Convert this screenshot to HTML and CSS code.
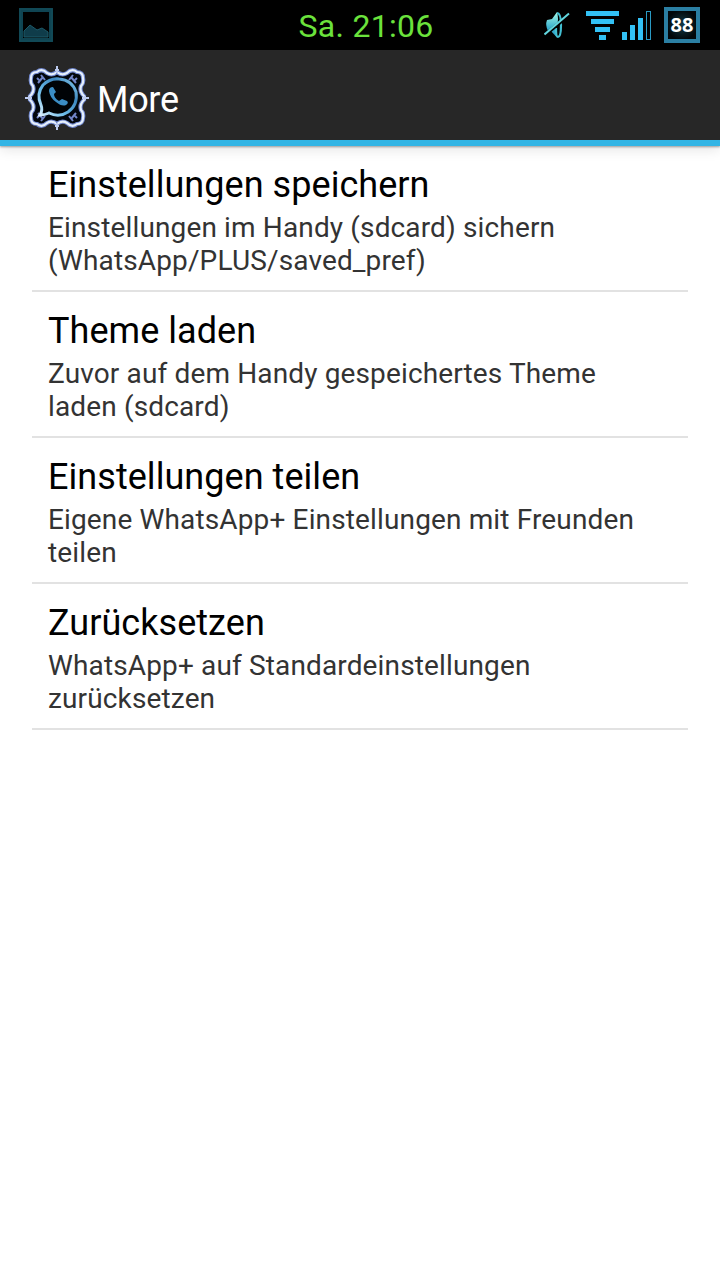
FILE: index.html
```html
<!DOCTYPE html>
<html lang="de">
  <head>
    <meta charset="utf-8">
    <title>More</title>
    <link rel="stylesheet" href="styles.css">
  </head>
  <body>
    <div class="status-bar">
      <div class="status-left">
        <svg class="icon-picture" width="34" height="34" viewBox="0 0 34 34">
          <rect x="2" y="2" width="30" height="30" fill="#000" stroke="#0f4452" stroke-width="4" />
          <rect x="1" y="1" width="32" height="32" fill="none" stroke="#144e5b" stroke-width="1" />
          <path d="M5 23 L11 17 L18 22 L23 20 L29 24 V29 H5 Z" fill="#0f3c4a" stroke="#1c5867" />
        </svg>
      </div>
      <span class="clock">Sa. 21:06</span>
      <div class="status-right">
        <svg class="icon-mute" width="26" height="28" viewBox="0 0 26 28">
          <defs>
            <linearGradient id="muteFill" x1="0" y1="0" x2="0" y2="1">
              <stop offset="0" stop-color="#a5fbe8" />
              <stop offset="1" stop-color="#229fc8" />
            </linearGradient>
          </defs>
          <path d="M3 9 L8 8 L13 1 Q15 8 13 14 L4 20 Q1 14 3 9 Z" fill="url(#muteFill)" />
          <path d="M7 20 L12 16 L12.500 26 Z" fill="#35aacb" />
          <path d="M13 2 Q17 2 17 14 Q17 26 14 26 Q12 26 12 17" fill="none" stroke="#43bfd2" stroke-width="2.200" />
          <path d="M1 24 L25 4" stroke="#000" stroke-width="3.500" />
          <path d="M0.500 23.500 L25 2.500" stroke="#62d6df" stroke-width="2" />
        </svg>
        <svg class="icon-wifi" width="33" height="29" viewBox="0 0 33 29">
          <path d="M0 0H33V5H0Z M5 8H28V13H5Z M9 16H24V21H9Z M13 24H20V29H13Z" fill="#33c1f5" />
        </svg>
        <svg class="icon-signal" width="29" height="29" viewBox="0 0 29 29">
          <path d="M0 21H5V29H0Z M8 14H13V29H8Z M16 7H21V29H16Z" fill="#33c1f5" />
          <rect x="24.500" y="0.500" width="4" height="28" fill="none" stroke="#2a9ac4" />
        </svg>
        <div class="battery">88</div>
      </div>
    </div>

    <div class="action-bar">
      <svg class="app-icon" width="64" height="64" viewBox="0 0 64 64">
        <defs>
          <linearGradient id="ring" x1="0" y1="1" x2="1" y2="0">
            <stop offset="0" stop-color="#e0f2ff" />
            <stop offset="0.350" stop-color="#6cbcea" />
            <stop offset="0.700" stop-color="#3c86be" />
            <stop offset="1" stop-color="#8cd0f2" />
          </linearGradient>
          <!-- one corner of the frame, mirrored into the other three -->
          <g id="corner">
            <path d="M32 6 Q27 10 22 7 Q17 2 12 6 Q6 6 6 12 Q5 17 8 20 Q10 26 4 31" fill="none" stroke="#6f86cc" stroke-width="4.200" />
            <path d="M32 6 Q27 10 22 7 Q17 2 12 6 Q6 6 6 12 Q5 17 8 20 Q10 26 4 31" fill="none" stroke="#e6f0fc" stroke-width="2.200" />
            <path d="M13 17 L18 11 M16 9 L20 14 M12 12 L14 14" fill="none" stroke="#7286c8" stroke-width="2" />
            <path d="M32 0 V7 M30 4 H32 M0 32 H7 M4 30 V32" fill="none" stroke="#bccbef" stroke-width="2" />
          </g>
        </defs>
        <path d="M32 8 Q38 9 43 8 Q50 4 57 7 Q60 13 56 20 Q55 27 60 32 Q55 38 56 44 Q60 51 57 57 Q50 60 43 56 Q38 55 32 56 Q26 55 21 56 Q14 60 7 57 Q4 51 8 44 Q9 38 4 32 Q9 27 8 20 Q4 13 7 7 Q14 4 21 8 Q26 9 32 8 Z" fill="#02070d" />
        <use href="#corner" />
        <use href="#corner" transform="translate(64 0) scale(-1 1)" />
        <use href="#corner" transform="translate(0 64) scale(1 -1)" />
        <use href="#corner" transform="translate(64 64) scale(-1 -1)" />
        <path d="M15 49 Q18 44 16 39 Q11 28 18 19 Q25 12 34 13 Q47 14 51 26 Q53 39 43 46 Q34 52 24 47 Q20 49 15 49 Z" fill="#000306" stroke="url(#ring)" stroke-width="3" />
        <path d="M28 21 Q24 21 24 25 Q25 32 31 36 Q37 41 41 39 Q44 37 42 35 L37 33 L34 35 Q29 32 29 28 L31 26 Z" fill="#3b8dc4" />
      </svg>
      <h1 class="title">More</h1>
    </div>

    <div class="settings">
      <div class="item">
        <div class="item-title">Einstellungen speichern</div>
        <div class="item-summary">Einstellungen im Handy (sdcard) sichern<br>(WhatsApp/PLUS/saved_pref)</div>
      </div>
      <div class="item">
        <div class="item-title">Theme laden</div>
        <div class="item-summary">Zuvor auf dem Handy gespeichertes Theme<br>laden (sdcard)</div>
      </div>
      <div class="item">
        <div class="item-title">Einstellungen teilen</div>
        <div class="item-summary">Eigene WhatsApp+ Einstellungen mit Freunden<br>teilen</div>
      </div>
      <div class="item">
        <div class="item-title">Zurücksetzen</div>
        <div class="item-summary">WhatsApp+ auf Standardeinstellungen<br>zurücksetzen</div>
      </div>
    </div>
  </body>
</html>
```
FILE: styles.css
```css
* {
  box-sizing: border-box;
}
body {
  margin: 0;
  min-height: 1280px;
  background-color: #fff;
  font-family: Roboto, "Noto Sans", sans-serif;
  color: #000;
}
svg {
  display: block;
}
.status-bar {
  display: grid;
  grid-template-columns: 1fr auto 1fr;
  align-items: center;
  height: 50px;
  padding: 0 20px 0 19px;
  background-color: #000;
}
.clock {
  padding: 2px 0 0 13px;
  font-size: 32px;
  line-height: 48px;
  letter-spacing: 0.3px;
  color: #6be23c;
}
.status-right {
  display: flex;
  justify-content: flex-end;
  align-items: center;
}
.icon-wifi {
  margin-left: 16px;
}
.icon-signal {
  margin-left: 3px;
}
.battery {
  width: 36px;
  height: 36px;
  margin-left: 13px;
  border: 4px solid #2b7fa3;
  background: radial-gradient(#123a46, #02080b 75%);
  color: #fff;
  font-family: "Noto Sans", sans-serif;
  font-size: 20px;
  font-weight: bold;
  line-height: 28px;
  text-align: center;
}
.action-bar {
  display: flex;
  align-items: center;
  height: 96px;
  padding-left: 25px;
  border-bottom: 6px solid #33b5e5;
  background-color: #272727;
  box-shadow: 0 1px 2px rgba(0, 0, 0, 0.35), 0 4px 12px rgba(0, 0, 0, 0.1);
}
.app-icon {
  margin-top: 5px;
}
.title {
  margin: 10px 0 0 8px;
  font-size: 36px;
  font-weight: normal;
  line-height: 42px;
  letter-spacing: -0.3px;
  color: #fff;
}
.settings {
  padding: 0 32px;
}
.item {
  height: 146px;
  padding: 18px 16px 0;
  border-bottom: 2px solid #e2e2e2;
}
.item-title {
  font-size: 36px;
  line-height: 42px;
  letter-spacing: 0.05px;
  white-space: nowrap;
}
.item-summary {
  margin-top: 5px;
  font-size: 28px;
  line-height: 33px;
  letter-spacing: 0.14px;
  color: #333;
  white-space: nowrap;
}
```
